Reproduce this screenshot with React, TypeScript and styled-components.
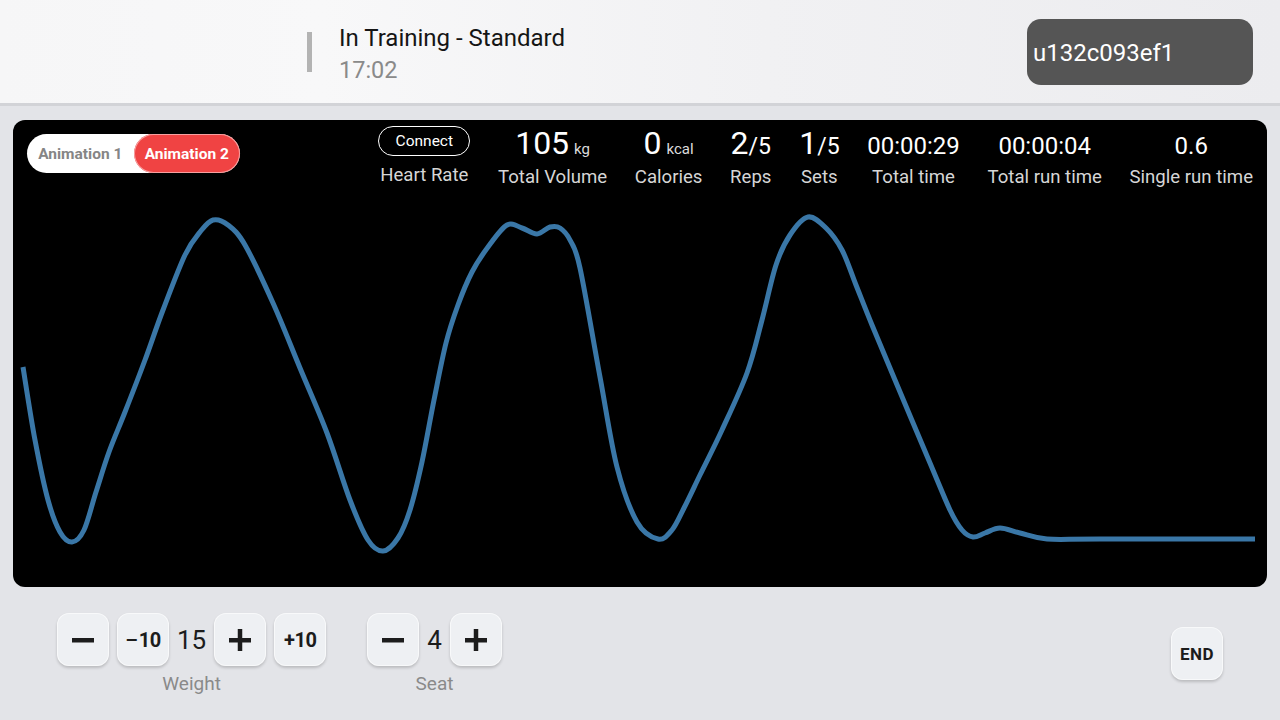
import styled, { createGlobalStyle } from "styled-components";

const GlobalStyle = createGlobalStyle`
  html, body {
    margin: 0;
    padding: 0;
    background: #e3e4e8;
    font-family: Roboto, "Noto Sans", sans-serif;
  }
`;

const Page = styled.div`
  width: 1280px;
  height: 720px;
  display: flex;
  flex-direction: column;
  overflow: hidden;
  background: #e3e4e8;
`;

const Header = styled.header`
  height: 103px;
  flex-shrink: 0;
  display: flex;
  align-items: center;
  padding-left: 307px;
  padding-right: 27px;
  background: linear-gradient(90deg, #f6f6f7 0%, #f8f8f9 25%, #f1f1f3 60%, #ececef 100%);
  border-bottom: 3px solid #d2d3d7;
`;

const Divider = styled.div`
  width: 5px;
  height: 40px;
  background: #b3b3b3;
  margin-right: 27px;
`;

const TitleBlock = styled.div`
  display: flex;
  flex-direction: column;
  gap: 4px;
  padding-top: 4px;
`;

const Title = styled.div`
  font-size: 24px;
  line-height: 28px;
  color: #151515;
`;

const Clock = styled.div`
  font-size: 23.5px;
  line-height: 28px;
  color: #8a8a8a;
`;

const UserBadge = styled.div`
  margin-left: auto;
  width: 226px;
  height: 66px;
  box-sizing: border-box;
  padding: 3px 0 0 6px;
  display: flex;
  align-items: center;
  background: #555555;
  border-radius: 14px;
  color: #ffffff;
  font-size: 24px;
`;

const Panel = styled.section`
  margin: 14px 13px 0;
  height: 467px;
  flex-shrink: 0;
  background: #000;
  border-radius: 12px;
  display: flex;
  flex-direction: column;
  overflow: hidden;
`;

const StatsBar = styled.div`
  height: 76px;
  flex-shrink: 0;
  display: flex;
  align-items: flex-start;
  padding: 6px 14px 0 14px;
  box-sizing: border-box;
`;

const Toggle = styled.div`
  margin-top: 8px;
  width: 213px;
  height: 39px;
  border-radius: 20px;
  background: #ffffff;
  display: flex;
  align-items: stretch;
  overflow: hidden;
`;

const ToggleOption = styled.div<{ $active?: boolean }>`
  flex: 1;
  display: flex;
  align-items: center;
  justify-content: center;
  font-size: 15.5px;
  font-weight: 700;
  border-radius: 20px;
  color: ${({ $active }) => ($active ? "#ffffff" : "#858585")};
  background: ${({ $active }) => ($active ? "#f04343" : "transparent")};
  box-shadow: ${({ $active }) => ($active ? "inset 0 0 0 1px #f6a0a0" : "none")};
`;

const Stats = styled.div`
  margin-left: auto;
  display: flex;
  gap: 27.7px;
`;

const Stat = styled.div`
  display: flex;
  flex-direction: column;
  align-items: center;
`;

const StatValue = styled.div<{ $small?: boolean }>`
  height: 40px;
  display: flex;
  align-items: baseline;
  justify-content: center;
  color: #ffffff;
  font-size: ${({ $small }) => ($small ? "24px" : "32px")};
  line-height: ${({ $small }) => ($small ? "41px" : "34px")};
  white-space: nowrap;
`;

const Unit = styled.span`
  font-size: 15px;
  margin-left: 5px;
  color: #dcdcdc;
`;

const Fraction = styled.span`
  font-size: 23px;
`;

const StatLabel = styled.div`
  font-size: 18.6px;
  line-height: 22px;
  color: #d6d6d6;
  white-space: nowrap;
`;

const ConnectButton = styled.button`
  height: 30px;
  width: 92px;
  margin-bottom: 8px;
  border: 1px solid #ffffff;
  border-radius: 16px;
  background: transparent;
  color: #ffffff;
  font-family: inherit;
  font-size: 15.5px;
  padding: 0;
`;

const Chart = styled.svg`
  display: block;
  flex: 1;
`;

const Controls = styled.div`
  display: flex;
  align-items: flex-start;
  padding: 26px 57px 0 57px;
  gap: 41px;
`;

const Group = styled.div`
  display: flex;
  flex-direction: column;
  align-items: center;
  gap: 6px;
`;

const GroupRow = styled.div`
  display: flex;
  align-items: center;
  gap: 8px;
`;

const Key = styled.button`
  width: 52px;
  height: 53px;
  padding: 0;
  border: none;
  border-radius: 12px;
  background: #eef0f3;
  box-shadow: 0 2px 3px rgba(0, 0, 0, 0.18), inset 0 0 0 1px rgba(255, 255, 255, 0.6);
  display: flex;
  align-items: center;
  justify-content: center;
  color: #1c1c1c;
  font-family: inherit;
  font-size: 20px;
  font-weight: 700;
  letter-spacing: -0.5px;
`;

const KeySign = styled.span`
  font-weight: 500;
  margin-right: 1px;
`;

const EndKey = styled(Key)`
  margin-left: auto;
  margin-top: 14px;
  font-size: 17px;
  letter-spacing: 0.5px;
`;

const Amount = styled.span`
  font-size: 26px;
  color: #1c1c1c;
`;

const GroupLabel = styled.div`
  font-size: 19px;
  color: #8a8a8a;
`;

const Minus = () => (
  <svg width="24" height="24" viewBox="0 0 24 24">
    <rect x="1" y="10" width="22" height="4.5" fill="#1c1c1c" />
  </svg>
);

const Plus = () => (
  <svg width="24" height="24" viewBox="0 0 24 24">
    <rect x="1" y="10" width="22" height="4.5" fill="#1c1c1c" />
    <rect x="9.75" y="1" width="4.5" height="22" fill="#1c1c1c" />
  </svg>
);

// sampled from the trace, page coordinates
const trace: [number, number][] = [
  [23, 367], [35, 440], [48, 500], [60, 532], [72, 542], [84, 530], [96, 492],
  [109, 452], [125, 412], [145, 360], [163, 310], [185, 255], [200, 232], [213, 220],
  [228, 225], [245, 245], [273, 303], [300, 368], [327, 433], [350, 500], [368, 540],
  [383, 551], [398, 538], [410, 510], [422, 462], [434, 400], [446, 343], [458, 305],
  [472, 272], [488, 247], [507, 225], [522, 228], [537, 234], [550, 227], [560, 228],
  [570, 240], [580, 268], [600, 377], [617, 467], [637, 522], [658, 539], [672, 530],
  [684, 508], [700, 475], [722, 430], [747, 373], [762, 320], [776, 265], [790, 235],
  [808, 217], [826, 228], [842, 250], [856, 285], [872, 325], [895, 380], [930, 463],
  [950, 510], [962, 530], [973, 537], [985, 533], [1000, 528], [1020, 533], [1047, 539],
  [1100, 539], [1255, 539],
];

const smoothPath = (pts: [number, number][]) => {
  let d = `M${pts[0][0]},${pts[0][1]}`;
  for (let i = 0; i < pts.length - 1; i++) {
    const p0 = pts[i - 1] || pts[i];
    const p1 = pts[i];
    const p2 = pts[i + 1];
    const p3 = pts[i + 2] || p2;
    const c1x = p1[0] + (p2[0] - p0[0]) / 6;
    const c1y = p1[1] + (p2[1] - p0[1]) / 6;
    const c2x = p2[0] - (p3[0] - p1[0]) / 6;
    const c2y = p2[1] - (p3[1] - p1[1]) / 6;
    d += ` C${c1x.toFixed(1)},${c1y.toFixed(1)} ${c2x.toFixed(1)},${c2y.toFixed(1)} ${p2[0]},${p2[1]}`;
  }
  return d;
};

const App = () => {
  return (
    <Page>
      <GlobalStyle />
      <Header>
        <Divider />
        <TitleBlock>
          <Title>In Training - Standard</Title>
          <Clock>17:02</Clock>
        </TitleBlock>
        <UserBadge>u132c093ef1</UserBadge>
      </Header>

      <Panel>
        <StatsBar>
          <Toggle>
            <ToggleOption>Animation 1</ToggleOption>
            <ToggleOption $active>Animation 2</ToggleOption>
          </Toggle>
          <Stats>
            <Stat>
              <ConnectButton>Connect</ConnectButton>
              <StatLabel>Heart Rate</StatLabel>
            </Stat>
            <Stat>
              <StatValue>105<Unit>kg</Unit></StatValue>
              <StatLabel>Total Volume</StatLabel>
            </Stat>
            <Stat>
              <StatValue>0<Unit>kcal</Unit></StatValue>
              <StatLabel>Calories</StatLabel>
            </Stat>
            <Stat>
              <StatValue>2<Fraction>/5</Fraction></StatValue>
              <StatLabel>Reps</StatLabel>
            </Stat>
            <Stat>
              <StatValue>1<Fraction>/5</Fraction></StatValue>
              <StatLabel>Sets</StatLabel>
            </Stat>
            <Stat>
              <StatValue $small>00:00:29</StatValue>
              <StatLabel>Total time</StatLabel>
            </Stat>
            <Stat>
              <StatValue $small>00:00:04</StatValue>
              <StatLabel>Total run time</StatLabel>
            </Stat>
            <Stat>
              <StatValue $small>0.6</StatValue>
              <StatLabel>Single run time</StatLabel>
            </Stat>
          </Stats>
        </StatsBar>
        <Chart width="1254" height="391" viewBox="13 196 1254 391">
          <path
            d={smoothPath(trace)}
            fill="none"
            stroke="#3a77a7"
            strokeWidth="5"
            strokeLinejoin="round"
          />
        </Chart>
      </Panel>

      <Controls>
        <Group>
          <GroupRow>
            <Key><Minus /></Key>
            <Key><KeySign>–</KeySign>10</Key>
            <Amount>15</Amount>
            <Key><Plus /></Key>
            <Key>+10</Key>
          </GroupRow>
          <GroupLabel>Weight</GroupLabel>
        </Group>
        <Group>
          <GroupRow>
            <Key><Minus /></Key>
            <Amount>4</Amount>
            <Key><Plus /></Key>
          </GroupRow>
          <GroupLabel>Seat</GroupLabel>
        </Group>
        <EndKey>END</EndKey>
      </Controls>
    </Page>
  );
};

export default App;
